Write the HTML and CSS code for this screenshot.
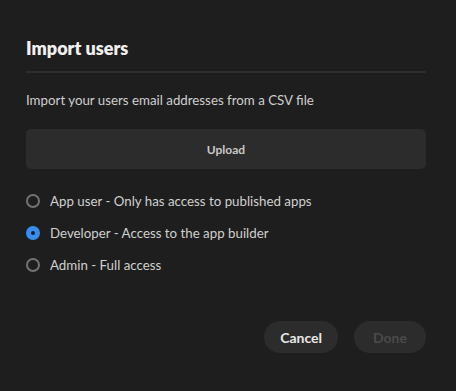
FILE: index.html
```html
<!DOCTYPE html>
<html lang="en">
<head>
    <meta charset="UTF-8">
    <meta name="viewport" content="width=device-width, initial-scale=1.0">
    <title>Import users</title>
    <link rel="stylesheet" href="styles.css">
</head>
<body>

    <div class="dialog">
        <h2 class="title">Import users</h2>
        <hr class="divider">

        <p class="hint">Import your users email addresses from a CSV file</p>

        <button class="upload">Upload</button>

        <!-- roles -->
        <div class="roles">
            <label class="role">
                <input type="radio" name="role" value="app_user">
                <span>App user - Only has access to published apps</span>
            </label>
            <label class="role">
                <input type="radio" name="role" value="developer" checked>
                <span>Developer - Access to the app builder</span>
            </label>
            <label class="role">
                <input type="radio" name="role" value="admin">
                <span>Admin - Full access</span>
            </label>
        </div>

        <div class="actions">
            <button class="pill">Cancel</button>
            <button class="pill" disabled>Done</button>
        </div>
    </div>

</body>
</html>
```

FILE: styles.css
```css
body {
    margin: 0;
    background-color: #1e1e1e;
    font-family: "Lato", "Open Sans", sans-serif;
    color: #d4d4d4;
}
.dialog {
    padding: 36px 30px 38px 26px;
}
.title {
    margin: 0;
    font-size: 18px;
    font-weight: 800;
    color: #f0f0f0;
    line-height: 24px;
}
.divider {
    margin: 11px 0 0;
    border: 0;
    height: 2px;
    background-color: #2d2d2d;
}
.hint {
    margin: 17px 0 0;
    font-size: 13.3px;
    line-height: 20px;
    color: #cfcfcf;
}
.upload {
    display: block;
    width: 100%;
    height: 40px;
    margin-top: 19px;
    border: 0;
    border-radius: 5px;
    background-color: #2c2c2c;
    color: #c8c8c8;
    font-family: inherit;
    font-size: 12px;
    font-weight: 700;
}
/* radio group */
.roles {
    margin-top: 22px;
    display: flex;
    flex-direction: column;
    gap: 12px;
}
.role {
    display: flex;
    align-items: center;
    gap: 10px;
    height: 20px;
    font-size: 13.3px;
    color: #d0d0d0;
}
.role input {
    appearance: none;
    margin: 0;
    width: 14px;
    height: 14px;
    border-radius: 50%;
    border: 2px solid #727272;
    box-sizing: border-box;
}
.role input:checked {
    border: 5px solid #378ef0;
    background-color: #1e1e1e;
}
.actions {
    margin-top: 46px;
    display: flex;
    justify-content: flex-end;
    gap: 16px;
}
.pill {
    height: 32px;
    padding: 0 16px;
    min-width: 72px;
    border: 0;
    border-radius: 16px;
    background-color: #2c2c2c;
    color: #e8e8e8;
    font-family: inherit;
    font-size: 14px;
    font-weight: 700;
}
.pill:disabled {
    color: #4a4a4a;
}
```
